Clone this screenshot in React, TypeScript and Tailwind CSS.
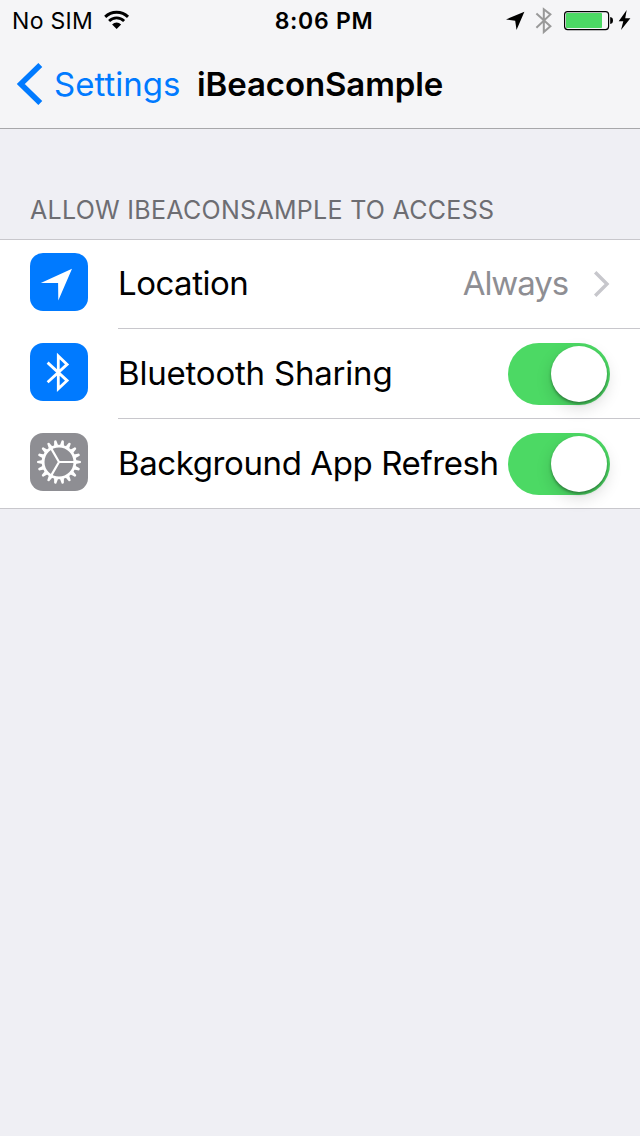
import type { ReactNode } from "react";

const TEETH = Array.from({ length: 18 }, (_, i) => i * 20);

function StatusBar() {
  return (
    <div className="flex h-10 items-center text-[23px] leading-10 text-black">
      <div className="flex w-[268px] items-center pl-3">
        <span className="mt-px w-[92px] whitespace-nowrap tracking-[0.3px]">No SIM</span>
        <svg width="26" height="20" viewBox="0 0 26 20" fill="none" stroke="#000">
          <path d="M1.2 6.9a16.2 16.2 0 0 1 22.8 0" strokeWidth="2.9" />
          <path d="M5.1 11a10.6 10.6 0 0 1 15 0" strokeWidth="2.8" />
          <path d="M12.600 19l-4.500-4.600a6.500 6.500 0 0 1 9 0z" fill="#000" stroke="none" />
        </svg>
      </div>
      <div className="mt-px w-[112px] text-center font-semibold whitespace-nowrap tracking-[0.7px]">8:06 PM</div>
      <svg className="ml-[120px]" width="140" height="40" viewBox="500 0 140 40" fill="none">
        <path d="M524.4 11.7L506 19.4l9.2 1.3 1.3 9.3z" fill="#000" />
        <path d="M536.4 13.5l14 12.8-6.6 5.7V9.2l6.6 5.2-14 13.3" stroke="#999" strokeWidth="2" />
        <rect x="564.6" y="11.6" width="44" height="18" rx="3" stroke="#000" strokeWidth="1.2" />
        <rect x="566" y="13" width="36" height="15" rx="0.8" fill="#4cd964" />
        <path d="M610.2 17c2 .3 2.8 1.5 2.8 3.5s-.8 3.200-2.800 3.500z" fill="#000" />
        <path d="M626.700 10l-8 11.200h4.600l-2.300 8.800 9.400-11.800h-5.200z" fill="#000" />
      </svg>
    </div>
  );
}

function NavBar() {
  return (
    <div className="flex h-[88px] items-center pl-4 text-[34px] leading-[88px] whitespace-nowrap">
      <svg width="27" height="42" viewBox="0 0 27 42" fill="none" stroke="#007aff" strokeWidth="5.600">
        <path d="M24.300 2L4.800 21l19.500 19" />
      </svg>
      <span className="ml-[11px] w-[143px] text-[33px] text-[#007aff]">Settings</span>
      <h1 className="text-[33px] font-semibold tracking-[-0.1px] text-black">iBeaconSample</h1>
    </div>
  );
}

function LocationIcon() {
  return (
    <svg width="58" height="58" viewBox="0 0 58 58">
      <path d="M42 15.800L10.800 29.900l17.300.1.200 17.400z" fill="#fff" />
    </svg>
  );
}

function BluetoothIcon() {
  return (
    <svg width="58" height="58" viewBox="0 0 58 58" fill="none" stroke="#fff" strokeWidth="2.800">
      <path d="M17.600 19.600l19.500 18-8.800 8.200V13l8.800 8.400-19.500 17.800" />
    </svg>
  );
}

function GearIcon() {
  return (
    <svg width="58" height="58" viewBox="-29 -29 58 58" fill="none" stroke="#fff">
      <circle r="15.900" strokeWidth="2.800" />
      {TEETH.map((angle) => (
        <path key={angle} d="M16.500-2.100L21.600-1.100Q22.500 0 21.600 1.100L16.500 2.100z" fill="#fff" stroke="none" transform={`rotate(${angle})`} />
      ))}
      <path d="M0 0H16M0 0L-8 13.860M0 0L-8-13.860" strokeWidth="2.200" />
    </svg>
  );
}

function Toggle() {
  return (
    <div role="switch" aria-checked="true" className="ml-auto flex h-[62px] w-[102px] shrink-0 items-center justify-end rounded-full bg-[#4cd964] pr-[3px]">
      <div className="size-14 rounded-full bg-white shadow-[0_6px_16px_rgba(0,0,0,0.15),0_2px_3px_rgba(0,0,0,0.35)]" />
    </div>
  );
}

function Row({ icon, color, label, last, children }: { icon: ReactNode; color: string; label: ReactNode; last?: boolean; children: ReactNode }) {
  return (
    <div className="flex h-[90px] pl-[30px]">
      <div className={`mt-[14px] size-[58px] shrink-0 rounded-[13px] ${color}`}>{icon}</div>
      <div className={`ml-[30px] flex flex-1 items-center pr-[30px] whitespace-nowrap ${last ? "" : "border-b border-[#c8c7cc]"}`}>
        {label}
        {children}
      </div>
    </div>
  );
}

export default function App() {
  return (
    <div className="h-[1136px] w-[640px] overflow-hidden bg-[#efeff4] font-['Inter',sans-serif]">
      <header className="h-[129px] border-b border-[#a7a7aa] bg-[#f5f5f7]">
        <StatusBar />
        <NavBar />
      </header>
      <main>
        <h2 className="h-[110px] pt-[66px] pl-[30px] text-[25px] leading-[30px] tracking-[0.29px] whitespace-nowrap text-[#6d6d72]">ALLOW IBEACONSAMPLE TO ACCESS</h2>
        <section className="h-[270px] bg-white shadow-[inset_0_1px_0_#c8c7cc,inset_0_-1px_0_#c8c7cc]">
          <Row icon={<LocationIcon />} color="bg-[#007aff]" label={<span className="text-[33px] tracking-[-0.5px]">Location</span>}>
            <span className="ml-auto text-[33px] tracking-[-1.1px] text-[#8e8e93]">Always</span>
            <svg className="ml-[25px]" width="17" height="28" viewBox="0 0 17 28" fill="none" stroke="#c7c7cc" strokeWidth="3.400">
              <path d="M2.200 2.200L14 14 2.200 25.800" />
            </svg>
          </Row>
          <Row icon={<BluetoothIcon />} color="bg-[#007aff]" label={<span className="text-[33px] tracking-[-0.2px]">Bluetooth Sharing</span>}>
            <Toggle />
          </Row>
          <Row icon={<GearIcon />} color="bg-[#8e8e93]" last label={<span className="text-[33px] tracking-[-0.4px]">Background App Refresh</span>}>
            <Toggle />
          </Row>
        </section>
      </main>
    </div>
  );
}
